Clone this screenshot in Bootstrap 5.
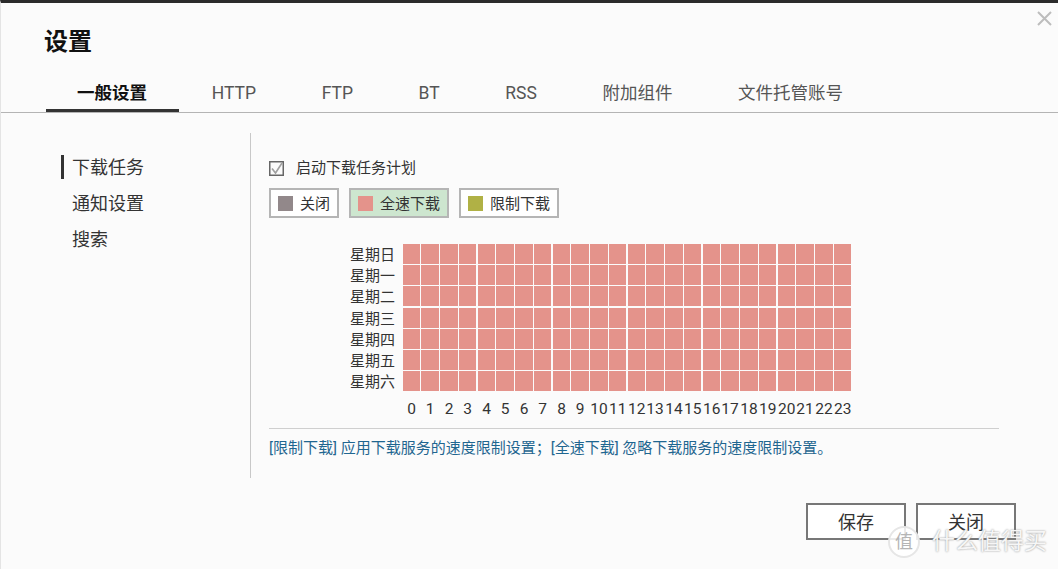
<!DOCTYPE html>
<html lang="zh-CN">
<head>
    <meta charset="UTF-8">
    <meta name="viewport" content="width=device-width, initial-scale=1.0">
    <title>设置</title>
    <link rel="stylesheet" href="https://cdn.jsdelivr.net/npm/bootstrap@5.3.0/dist/css/bootstrap.min.css">
    <style>
        html, body { height: 100%; overflow: hidden; }
        body {
            font-family: Roboto, "Noto Sans CJK SC", sans-serif;
            background: #fbfbfb;
            color: #333;
        }
        .dialog {
            position: relative;
            height: 569px;
            border-top: 3px solid #2b2b2b;
            border-left: 1px solid #e4e4e4;
        }
        .close-x { position: absolute; top: 7px; right: 6px; line-height: 0; }
        .dlg-title { font-size: 24px; font-weight: 700; color: #111; line-height: 32px; padding: 23px 0 0 43px; margin: 0; }
        .tabs { padding-left: 45px; height: 53px; margin-top: 2px; border-bottom: 1px solid #b4b4b4; }
        .tabs .nav-link {
            height: 52px; padding: 0 32.8px; line-height: 66px; font-size: 17.5px; color: #555;
            border-bottom: 3px solid transparent; border-radius: 0;
        }
        .tabs .nav-link.active { color: #111; font-weight: 700; border-bottom-color: #333; padding: 0 32px 0 31px; }
        .body-row { padding-top: 20px; height: 366px; }
        .side { width: 250px; height: 345px; border-right: 1px solid #c8c8c8; padding: 16px 0 0 60px; flex-shrink: 0; }
        .side-item { font-size: 18px; height: 36px; line-height: 38px; padding-left: 11px; color: #333; }
        .side-item.current { position: relative; }
        .side-item.current::before { content: ""; position: absolute; left: 0; top: 6px; width: 3px; height: 24px; background: #333; }
        .pane { padding: 25px 0 0 18px; width: 749px; }
        .check-row { font-size: 15px; height: 20px; gap: 12px; }
        .check-row span { line-height: 22px; }
        .legend { margin-top: 10px; gap: 10px; }
        .legend-btn {
            height: 30px; border: 2px solid #b5b5b5; background: #fff; border-radius: 0;
            font-size: 15px; color: #333; padding: 2px 7px 0; gap: 7px;
        }
        .legend-btn.on { background: #cde6cf; }
        .swatch { width: 15px; height: 15px; display: block; margin-bottom: 2px; }
        .sw-off { background: #92888a; }
        .sw-full { background: #e4938b; }
        .sw-limit { background: #b0b145; }
        .sched { margin-top: 26px; }
        .day-col { width: 134px; text-align: right; padding-right: 8px; font-size: 15px; flex-shrink: 0; }
        .day-col div { height: 21px; line-height: 23px; }
        .day-col div:nth-child(3) { height: 22px; }
        /* every 4th column is 1px narrower and leaves a wider gap */
        .hour-grid { display: grid; grid-template-columns: repeat(6, 17px 18px 18px 18px); column-gap: 1px; width: 448px; }
        .hour-grid > :nth-child(4n) { margin-right: 1px; }
        .cells { grid-template-rows: 20px 20px 21px 20px 20px 20px 20px; row-gap: 1px; height: 147px; }
        .cell { background: #e4938b; }
        .cell:nth-child(n+49):nth-child(-n+72) { height: 20px; }
        .hours { margin: 8px 0 0 134px; font-size: 15.5px; line-height: 18px; text-align: center; white-space: nowrap; }
        .hours span { display: block; }
        .split { margin: 10px 0 0; width: 730px; border-top: 1px solid #cfcfcf; opacity: 1; }
        .note { font-size: 15px; color: #1f6690; margin: 9px 0 0; line-height: 20px; white-space: nowrap; }
        .foot { padding-right: 42px; gap: 10px; margin-top: 24px; }
        .foot-btn {
            width: 100px; height: 37px; padding: 2px 0 0; border: 2px solid #777; border-radius: 0;
            background: #fff; color: #333; font-size: 18px; line-height: 31px;
        }
        .mark-over { position: absolute; left: 887px; top: 523px; pointer-events: none; gap: 12px; }
        .mark-dot {
            width: 32px; height: 32px; border-radius: 50%; border: 2px solid #e6e6e6; background: rgba(255,255,255,.85);
            color: #b5b5b5; font-size: 18px; line-height: 27px; text-align: center;
        }
        .mark-text { font-size: 23px; line-height: 20px; color: #f6f6f6; text-shadow: 0 0 2px #888; white-space: nowrap; }
    </style>
</head>
<body>
    <div class="dialog">
        <a class="close-x" href="#" aria-label="关闭">
            <svg width="16" height="16" viewBox="0 0 16 16"><path d="M2 2 L15 15 M15 2 L2 15" stroke="#bdbdbd" stroke-width="2" fill="none"/></svg>
        </a>

        <h1 class="dlg-title">设置</h1>

        <ul class="nav tabs">
            <li class="nav-item"><a class="nav-link active" href="#">一般设置</a></li>
            <li class="nav-item"><a class="nav-link" href="#">HTTP</a></li>
            <li class="nav-item"><a class="nav-link" href="#">FTP</a></li>
            <li class="nav-item"><a class="nav-link" href="#">BT</a></li>
            <li class="nav-item"><a class="nav-link" href="#">RSS</a></li>
            <li class="nav-item"><a class="nav-link" href="#">附加组件</a></li>
            <li class="nav-item"><a class="nav-link" href="#">文件托管账号</a></li>
        </ul>

        <div class="d-flex body-row">
            <div class="side">
                <div class="side-item current">下载任务</div>
                <div class="side-item">通知设置</div>
                <div class="side-item">搜索</div>
            </div>
            <div class="pane">
                <div class="d-flex align-items-center check-row">
                    <svg width="15" height="15" viewBox="0 0 15 15">
                        <rect x="0.75" y="0.75" width="13.5" height="13.5" fill="#fbfbfb" stroke="#666" stroke-width="1.5"/>
                        <path d="M3 7.5 L6.5 12 L13 2" stroke="#a0a0a0" stroke-width="1.6" fill="none"/>
                    </svg>
                    <span>启动下载任务计划</span>
                </div>
                <div class="d-flex legend">
                    <button class="btn d-flex align-items-center legend-btn" type="button"><span class="swatch sw-off"></span>关闭</button>
                    <button class="btn d-flex align-items-center legend-btn on" type="button"><span class="swatch sw-full"></span>全速下载</button>
                    <button class="btn d-flex align-items-center legend-btn" type="button"><span class="swatch sw-limit"></span>限制下载</button>
                </div>

                <div class="sched d-flex">
                    <div class="day-col">
                        <div>星期日</div><div>星期一</div><div>星期二</div><div>星期三</div><div>星期四</div><div>星期五</div><div>星期六</div>
                    </div>
                    <div class="hour-grid cells" id="cells"></div>
                </div>
                <div class="hour-grid hours" id="hours"></div>

                <hr class="split">
                <p class="note">[限制下载] 应用下载服务的速度限制设置；[全速下载] 忽略下载服务的速度限制设置。</p>
            </div>
        </div>

        <div class="d-flex justify-content-end foot">
            <button class="btn foot-btn" type="button">保存</button>
            <button class="btn foot-btn" type="button">关闭</button>
        </div>

        <div class="mark-over d-flex align-items-center">
            <div class="mark-dot">值</div>
            <div class="mark-text">什么值得买</div>
        </div>
    </div>

    <script>
        let cells = document.getElementById("cells");
        let hours = document.getElementById("hours");
        for (let i = 0; i < 7 * 24; i++) {
            let c = document.createElement("div");
            c.className = "cell";
            cells.appendChild(c);
        }
        for (let h = 0; h < 24; h++) {
            let s = document.createElement("span");
            s.textContent = h;
            hours.appendChild(s);
        }
    </script>
    <script src="https://cdn.jsdelivr.net/npm/bootstrap@5.3.0/dist/js/bootstrap.bundle.min.js"></script>
</body>
</html>
